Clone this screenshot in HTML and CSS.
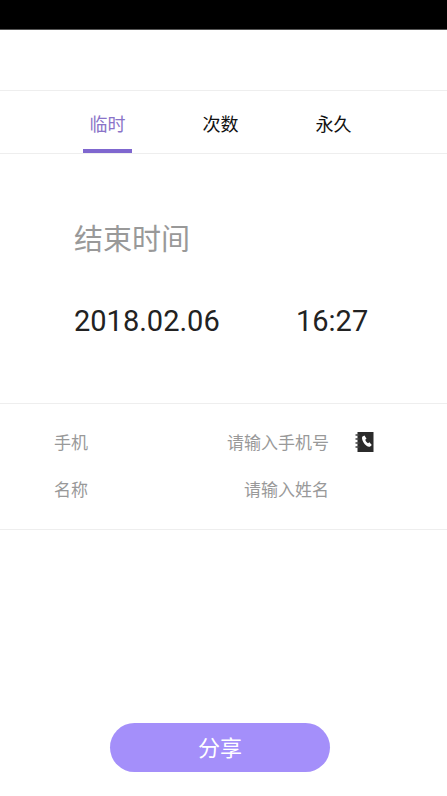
FILE: index.html
```html
<!DOCTYPE html>
<html lang="zh-CN">
<head>
  <meta charset="UTF-8" />
  <meta name="viewport" content="width=device-width, initial-scale=1.0"/>
  <title>分享</title>
  <link rel="stylesheet" href="styles.css">
</head>
<body>
  <div class="status-bar"></div>
  <div class="nav-bar"></div>

  <div class="tabs">
    <div class="tab active">临时</div>
    <div class="tab">次数</div>
    <div class="tab">永久</div>
  </div>

  <div class="time-panel">
    <div class="time-label">结束时间</div>
    <div class="time-values">
      <span class="date">2018.02.06</span>
      <span class="clock">16:27</span>
    </div>
  </div>

  <div class="form">
    <div class="form-row">
      <span class="form-label">手机</span>
      <span class="form-hint">请输入手机号</span>
      <svg class="contact-icon" width="19" height="22" viewBox="0 0 19 22">
        <rect x="2.500" y="1" width="16" height="20" fill="#2b2b2b"/>
        <path d="M0.500 4h4M0.500 8h4M0.500 12h4M0.500 16h4" stroke="#444" stroke-width="1.400"/>
        <path d="M7.500 5.500l2-1 2 3.200-1.300 1.100c.5 1.500 1.400 2.600 2.800 3.500l1.400-1 2.400 2.800-1.600 1.500c-1 .6-2.400.2-4-1.100C8.900 12.600 7.100 9.500 7 7.200c0-.8.100-1.300.500-1.700z" fill="#fff"/>
      </svg>
    </div>
    <div class="form-row">
      <span class="form-label">名称</span>
      <span class="form-hint">请输入姓名</span>
    </div>
  </div>

  <div class="footer">
    <button class="share-btn">分享</button>
  </div>
</body>
</html>
```

FILE: styles.css
```css
* {
  box-sizing: border-box;
}
html, body {
  height: 100%;
}
body {
  margin: 0;
  display: flex;
  flex-direction: column;
  background: #fff;
  font-family: Roboto, "Noto Sans CJK SC", sans-serif;
  overflow: hidden;
}
.status-bar {
  height: 30px;
  background: #000;
  border-bottom: 1px solid #555;
}
.nav-bar {
  height: 61px;
  border-bottom: 1px solid #eee;
}
.tabs {
  display: flex;
  height: 63px;
  padding-left: 51px;
  border-bottom: 1px solid #eee;
}
.tab {
  width: 113px;
  text-align: center;
  font-size: 18px;
  line-height: 24px;
  padding-top: 22px;
  margin-bottom: -1px;
  color: #111;
}
.tab.active {
  color: #8a73c8;
  position: relative;
}
.tab.active::after {
  content: "";
  position: absolute;
  left: 32px;
  bottom: 1px;
  width: 49px;
  height: 4px;
  background: #7f67cf;
}
.time-panel {
  height: 250px;
  padding: 66px 0 0 74px;
  border-bottom: 1px solid #eee;
}
.time-label {
  font-size: 29px;
  line-height: 40px;
  color: #999;
}
.time-values {
  display: flex;
  margin-top: 41px;
  font-size: 29px;
  line-height: 40px;
  color: #222;
}
.date {
  width: 222px;
}
.form {
  height: 126px;
  padding-top: 14px;
  border-bottom: 1px solid #eee;
}
.form-row {
  display: flex;
  align-items: center;
  height: 47px;
  padding-left: 54px;
  font-size: 17px;
  color: #999;
}
.form-label {
  width: 114px;
}
.form-hint {
  width: 161px;
  text-align: right;
}
.contact-icon {
  margin-left: 26px;
}
.footer {
  display: flex;
  padding: 193px 0 0 110px;
}
.share-btn {
  width: 220px;
  height: 49px;
  padding: 0 0 3px;
  border: none;
  border-radius: 25px;
  background: #a48ffa;
  color: #fff;
  font-family: inherit;
  font-size: 22px;
}
```
